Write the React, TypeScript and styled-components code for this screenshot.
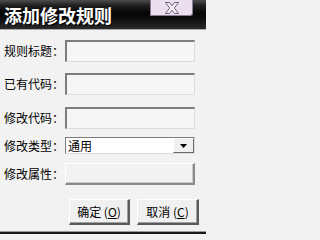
import styled, { createGlobalStyle } from "styled-components";

const GlobalStyle = createGlobalStyle`
  html, body {
    margin: 0;
    padding: 0;
    background: #f2f2f2;
  }
`;

const fields = [
  { label: "规则标题：", kind: "input", top: 10 },
  { label: "已有代码：", kind: "input", top: 11 },
  { label: "修改代码：", kind: "input", top: 12 },
  { label: "修改类型：", kind: "select", top: 8, value: "通用" },
  { label: "修改属性：", kind: "flat", top: 9 },
];

const App = () => {
  return (
    <Window>
      <GlobalStyle />
      <TitleBar>
        <Title>添加修改规则</Title>
        <CloseButton>
          <svg width="16" height="12" viewBox="0 0 16 12">
            <path
              d="M1.5 0.5 L5.5 0.5 L8 3.8 L10.5 0.5 L14.5 0.5 L10.3 6 L14.5 11.5 L10.5 11.5 L8 8.2 L5.5 11.5 L1.5 11.5 L5.7 6 Z"
              fill="#f6f0f8"
              stroke="#6e6076"
              strokeWidth="1"
            />
          </svg>
        </CloseButton>
      </TitleBar>
      <Body>
        {fields.map((f) => (
          <Row key={f.label} top={f.top}>
            <Label>{f.label}</Label>
            {f.kind === "input" && <TextBox />}
            {f.kind === "flat" && <FlatBox />}
            {f.kind === "select" && (
              <Select>
                <SelectValue>{f.value}</SelectValue>
                <DropButton>
                  <svg width="7" height="4" viewBox="0 0 7 4">
                    <path d="M0 0 L7 0 L3.5 4 Z" fill="#000" />
                  </svg>
                </DropButton>
              </Select>
            )}
          </Row>
        ))}
        <Buttons>
          <Button w={61}>
            确定 (<u>O</u>)
          </Button>
          <Button w={62}>
            取消 (<u>C</u>)
          </Button>
        </Buttons>
      </Body>
      <BottomEdge />
    </Window>
  );
};

export default App;

const Window = styled.div`
  width: 206px;
  height: 234px;
  display: flex;
  flex-direction: column;
  background: #f2f2f2;
  font-family: "Noto Sans CJK SC", "Liberation Sans", sans-serif;
  overflow: hidden;
`;

const TitleBar = styled.div`
  height: 29px;
  display: flex;
  align-items: flex-start;
  justify-content: space-between;
  background: linear-gradient(
    to bottom,
    #4c4c4c 0%,
    #1e1e1e 20%,
    #050505 45%,
    #111 70%,
    #2a2a2a 100%
  );
  border-bottom: 1px solid #a8a8a8;
  flex-shrink: 0;
`;

const Title = styled.div`
  color: #fff;
  font-size: 18px;
  font-weight: 700;
  line-height: 18px;
  margin: 6px 0 0 4px;
  text-shadow: 1px 1px 0 #000, 1px 0 0 #333;
`;

const CloseButton = styled.div`
  width: 41px;
  height: 15px;
  margin-right: 13px;
  background: #ebdfef;
  border: 1px solid #8c7c94;
  border-top: none;
  border-radius: 0 0 3px 0;
  display: flex;
  align-items: center;
  justify-content: center;
`;

const Body = styled.div`
  flex: 1;
  display: flex;
  flex-direction: column;
  padding: 0 11px 0 4px;
`;

const Row = styled.div<{ top: number }>`
  display: flex;
  align-items: center;
  margin-top: ${({ top }) => top}px;
`;

const Label = styled.div`
  width: 61px;
  font-size: 12px;
  line-height: 14px;
  color: #000;
  white-space: nowrap;
`;

const TextBox = styled.div`
  width: 130px;
  height: 22px;
  box-sizing: border-box;
  background: #f6f6f6;
  border-top: 2px solid #7c7c7c;
  border-left: 2px solid #7c7c7c;
  border-right: 1px solid #dcdcdc;
  border-bottom: 1px solid #dcdcdc;
`;

const FlatBox = styled.div`
  width: 130px;
  height: 22px;
  box-sizing: border-box;
  background: #f2f2f2;
  border-top: 1px solid #fff;
  border-left: 1px solid #fff;
  border-right: 2px solid #8a8a8a;
  border-bottom: 2px solid #8a8a8a;
  box-shadow: inset -1px -1px 0 #c8c8c8;
`;

const Select = styled.div`
  width: 130px;
  height: 17px;
  box-sizing: border-box;
  display: flex;
  align-items: center;
  justify-content: space-between;
  background: #fff;
  border-top: 1px solid #7c7c7c;
  border-left: 1px solid #7c7c7c;
  border-right: 1px solid #dcdcdc;
  border-bottom: 1px solid #dcdcdc;
`;

const SelectValue = styled.div`
  font-size: 12px;
  line-height: 14px;
  padding-left: 2px;
  color: #000;
`;

const DropButton = styled.div`
  width: 21px;
  height: 15px;
  box-sizing: border-box;
  display: flex;
  align-items: center;
  justify-content: center;
  background: #f0f0f0;
  border-top: 1px solid #fff;
  border-left: 1px solid #fff;
  border-right: 1px solid #6a6a6a;
  border-bottom: 1px solid #6a6a6a;
`;

const Buttons = styled.div`
  display: flex;
  justify-content: flex-end;
  gap: 7px;
  margin-top: 14px;
  margin-right: -4px;
`;

const Button = styled.div<{ w: number }>`
  width: ${({ w }) => w}px;
  height: 26px;
  box-sizing: border-box;
  display: flex;
  align-items: center;
  justify-content: center;
  background: #f0f0f0;
  border-top: 1px solid #fff;
  border-left: 1px solid #fff;
  border-right: 2px solid #5a5a5a;
  border-bottom: 2px solid #5a5a5a;
  box-shadow: inset -1px -1px 0 #a0a0a0;
  font-size: 12px;
  color: #000;

  u {
    text-decoration: underline;
  }
`;

const BottomEdge = styled.div`
  height: 2px;
  background: #1a1a1a;
  border-top: 1px solid #9a9a9a;
  flex-shrink: 0;
`;
